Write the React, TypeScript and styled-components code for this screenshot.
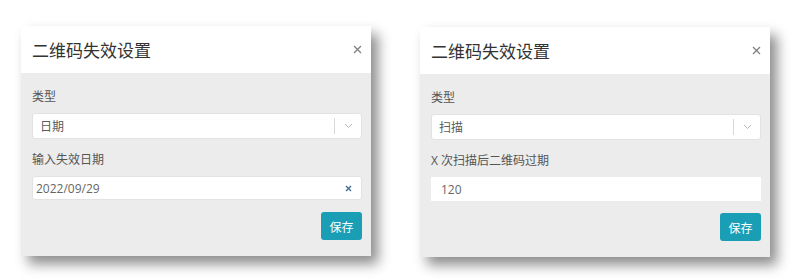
import React from 'react';
import styled, { createGlobalStyle } from 'styled-components';

const GlobalStyle = createGlobalStyle`
  html, body {
    margin: 0;
    padding: 0;
    background: #ffffff;
  }
  body {
    font-family: "Open Sans", "Noto Sans CJK SC", sans-serif;
  }
`;

const Page = styled.div`
  display: flex;
  align-items: flex-start;
  gap: 49px;
  padding: 0 0 0 21px;
  width: 800px;
  height: 279px;
  box-sizing: border-box;
`;

const Dialog = styled.div<{ $top: number }>`
  width: 350px;
  margin-top: ${(p) => p.$top}px;
  background: #ececec;
  box-shadow: 7px 8px 12px rgba(0, 0, 0, 0.45);
  display: flex;
  flex-direction: column;
`;

const Header = styled.div`
  height: 47px;
  background: #ffffff;
  display: flex;
  align-items: center;
  justify-content: space-between;
  padding: 0 7px 0 11px;
`;

const Title = styled.h4`
  margin: 0;
  font-size: 17px;
  font-weight: 400;
  color: #333;
  font-family: "Noto Sans CJK SC", sans-serif;
`;

const Close = styled.button`
  border: none;
  background: none;
  padding: 0;
  width: 14px;
  height: 14px;
  display: flex;
  align-items: center;
  justify-content: center;
`;

const Body = styled.div`
  padding: 16px 9px 16px 11px;
  display: flex;
  flex-direction: column;
`;

const Label = styled.label<{ $gap?: number }>`
  font-size: 12px;
  line-height: 16px;
  color: #555;
  margin-top: ${(p) => p.$gap ?? 0}px;
  margin-bottom: 8px;
`;

const Select = styled.div`
  height: 26px;
  box-sizing: border-box;
  background: #fff;
  border: 1px solid #e2e2e2;
  border-radius: 3px;
  display: flex;
  align-items: center;
`;

const SelectValue = styled.span`
  flex: 1;
  padding-left: 7px;
  font-size: 12px;
  color: #5a5a5a;
`;

const Divider = styled.span`
  width: 1px;
  height: 16px;
  background: #d8d8d8;
`;

const Arrow = styled.span`
  width: 26px;
  display: flex;
  align-items: center;
  justify-content: center;
`;

const Input = styled.div<{ $bordered?: boolean }>`
  height: 24px;
  box-sizing: border-box;
  background: #fff;
  border: 1px solid ${(p) => (p.$bordered ? '#e2e2e2' : '#fff')};
  border-radius: ${(p) => (p.$bordered ? 3 : 0)}px;
  display: flex;
  align-items: center;
  padding: 0 9px 0 ${(p) => (p.$bordered ? 3 : 9)}px;
  font-size: 12px;
  color: #666;
`;

const InputText = styled.span`
  flex: 1;
`;

const Footer = styled.div`
  display: flex;
  justify-content: flex-end;
  margin-top: 12px;
`;

const SaveButton = styled.button`
  width: 41px;
  height: 28px;
  border: none;
  border-radius: 3px;
  background: #1a9eb5;
  color: #fff;
  font-size: 12px;
  font-family: "Noto Sans CJK SC", sans-serif;
  padding: 0;
`;

const CloseIcon = () => (
  <svg width="9" height="9" viewBox="0 0 9 9">
    <path d="M1 1 L8 8 M8 1 L1 8" stroke="#808080" strokeWidth="1.3" />
  </svg>
);

const Chevron = () => (
  <svg width="9" height="6" viewBox="0 0 9 6">
    <path d="M1 1 L4.5 4.5 L8 1" stroke="#b5b5b5" strokeWidth="1" fill="none" />
  </svg>
);

const ClearIcon = () => (
  <svg width="7" height="7" viewBox="0 0 7 7">
    <path d="M1 1 L6 6 M6 1 L1 6" stroke="#3d6b96" strokeWidth="1.3" />
  </svg>
);

type Props = {
  top: number;
  type: string;
  label: string;
  value: string;
  date?: boolean;
};

function ExpireDialog({ top, type, label, value, date }: Props) {
  return (
    <Dialog $top={top}>
      <Header>
        <Title>二维码失效设置</Title>
        <Close>
          <CloseIcon />
        </Close>
      </Header>
      <Body>
        <Label>类型</Label>
        <Select>
          <SelectValue>{type}</SelectValue>
          <Divider />
          <Arrow>
            <Chevron />
          </Arrow>
        </Select>
        <Label $gap={13}>{label}</Label>
        <Input $bordered={date}>
          <InputText>{value}</InputText>
          {date && <ClearIcon />}
        </Input>
        <Footer>
          <SaveButton>保存</SaveButton>
        </Footer>
      </Body>
    </Dialog>
  );
}

export default function App() {
  return (
    <>
      <GlobalStyle />
      <Page>
        <ExpireDialog top={26} type="日期" label="输入失效日期" value="2022/09/29" date />
        <ExpireDialog top={27} type="扫描" label="X 次扫描后二维码过期" value="120" />
      </Page>
    </>
  );
}
